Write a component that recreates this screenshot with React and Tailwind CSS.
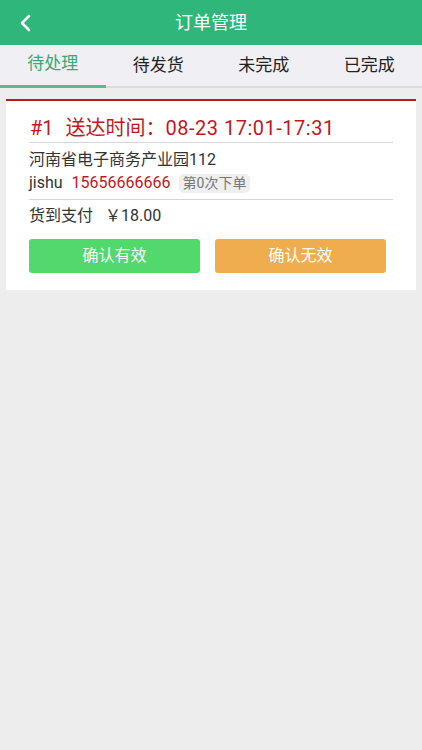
const font = { fontFamily: 'Roboto, "Noto Sans CJK SC", sans-serif' };

const tabs = ["待处理", "待发货", "未完成", "已完成"];

export default function App() {
  return (
    <div className="flex min-h-[750px] w-[422px] flex-col bg-[#ededed]" style={font}>
      <div className="relative flex h-[45px] items-center justify-center bg-[#2eb67b]">
        <svg
          className="absolute left-[19px] top-[14px]"
          width="14"
          height="18"
          viewBox="0 0 14 18"
          fill="none"
        >
          <path d="M10 2 L3 9 L10 16" stroke="white" strokeWidth="2.6" strokeLinecap="round" strokeLinejoin="round" />
        </svg>
        <span className="text-[18px] text-white">订单管理</span>
      </div>

      <div className="flex h-[43px] border-b-2 border-[#dcdcdc] bg-[#f0eff4]">
        {tabs.map((t, i) => (
          <div
            key={t}
            className={`-mb-[2px] flex flex-1 items-center justify-center text-[17px] ${
              i === 0 ? "border-b-[3px] border-[#5cb98f] text-[#3aa877]" : "text-[#222]"
            }`}
          >
            <span className="-mt-[2px]">{t}</span>
          </div>
        ))}
      </div>

      <div className="mx-[6px] mt-[11px] border-t-2 border-[#b71c1c] bg-white px-[23px] pb-[17px]">
        <div className="flex h-[42px] border-b border-[#d6d6d6] pt-[15px] text-[20px] leading-[24px] text-[#c0181d]">
          <span className="pl-[1px]">#1</span>
          <span className="ml-[12px]">
            送达时间：<span className="tracking-[0.5px]">08-23 17:01-17:31</span>
          </span>
        </div>
        <div className="border-b border-[#d6d6d6] pb-[5px] pt-[5px] text-[16px] text-[#333]">
          <div className="leading-[24px]">河南省电子商务产业园112</div>
          <div className="flex items-center leading-[22px]">
            <span>jishu</span>
            <span className="ml-[9px] text-[#c0181d]">15656666666</span>
            <span className="ml-[8px] rounded-[5px] bg-[#efefef] px-[4px] text-[14px] leading-[19px] text-[#777]">第0次下单</span>
          </div>
        </div>
        <div className="pt-[4px] text-[16px] leading-[23px] text-[#333]">
          货到支付<span className="ml-[12px]">￥18.00</span>
        </div>
        <div className="mt-[12px] flex gap-[15px]">
          <button className="h-[34px] w-[171px] rounded-[3px] bg-[#51d96b] text-[16px] text-white">确认有效</button>
          <button className="h-[34px] w-[171px] rounded-[3px] bg-[#efad4d] text-[16px] text-white">确认无效</button>
        </div>
      </div>
    </div>
  );
}
